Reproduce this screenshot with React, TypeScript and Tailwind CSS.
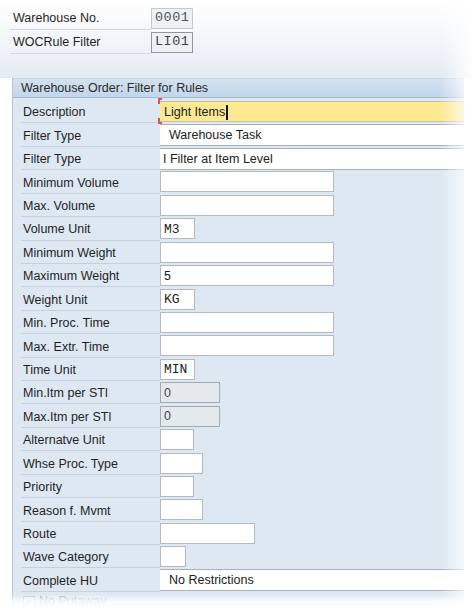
import React from 'react';

type Row =
  | { label: string; kind: 'desc' }
  | { label: string; kind: 'full'; value: string; indent?: boolean }
  | { label: string; kind: 'box'; w: string; value?: string; mono?: boolean; gray?: boolean };

const rows: Row[] = [
  { label: 'Description', kind: 'desc' },
  { label: 'Filter Type', kind: 'full', value: 'Warehouse Task', indent: true },
  { label: 'Filter Type', kind: 'full', value: 'I Filter at Item Level' },
  { label: 'Minimum Volume', kind: 'box', w: 'w-[174px]' },
  { label: 'Max. Volume', kind: 'box', w: 'w-[174px]' },
  { label: 'Volume Unit', kind: 'box', w: 'w-[35px]', value: 'M3', mono: true },
  { label: 'Minimum Weight', kind: 'box', w: 'w-[174px]' },
  { label: 'Maximum Weight', kind: 'box', w: 'w-[174px]', value: '5' },
  { label: 'Weight Unit', kind: 'box', w: 'w-[35px]', value: 'KG', mono: true },
  { label: 'Min. Proc. Time', kind: 'box', w: 'w-[174px]' },
  { label: 'Max. Extr. Time', kind: 'box', w: 'w-[174px]' },
  { label: 'Time Unit', kind: 'box', w: 'w-[35px]', value: 'MIN', mono: true },
  { label: 'Min.Itm per STl', kind: 'box', w: 'w-[60px]', value: '0', gray: true },
  { label: 'Max.Itm per STl', kind: 'box', w: 'w-[60px]', value: '0', gray: true },
  { label: 'Alternatve Unit', kind: 'box', w: 'w-[34px]' },
  { label: 'Whse Proc. Type', kind: 'box', w: 'w-[43px]' },
  { label: 'Priority', kind: 'box', w: 'w-[34px]' },
  { label: 'Reason f. Mvmt', kind: 'box', w: 'w-[43px]' },
  { label: 'Route', kind: 'box', w: 'w-[95px]' },
  { label: 'Wave Category', kind: 'box', w: 'w-[26px]' },
  { label: 'Complete HU', kind: 'full', value: 'No Restrictions', indent: true },
];

const sans = { fontFamily: '"Liberation Sans", Arial, sans-serif' };
const mono = { fontFamily: '"Liberation Mono", "Courier New", monospace' };

function Field({ row }: { row: Row }) {
  if (row.kind === 'desc') {
    return (
      <div className="relative flex-1 h-full flex items-center">
        <div className="h-[21px] w-full bg-[#fde992] border-y border-[#c9c2a0] flex items-center pl-[4px] pt-[1px] text-[12.5px] text-[#222]">
          <span>Light Items</span>
          <span className="inline-block w-[1.5px] h-[15px] bg-[#111] ml-[1px]" />
        </div>
        <div className="absolute left-[-2px] top-[-2px] w-[4px] h-[6px] border-l-2 border-t-2 border-[#d9565c]" />
        <div className="absolute left-[-2px] bottom-[-1px] w-[4px] h-[6px] border-l-2 border-b-2 border-[#d9565c]" />
      </div>
    );
  }
  if (row.kind === 'full') {
    return (
      <div className="flex-1 h-full flex items-center">
        <div
          className={`h-[22px] w-full bg-white border-y border-[#a9b0b8] flex items-center pt-[1px] text-[12.5px] text-[#222] ${
            row.indent ? 'pl-[9px]' : 'pl-[3px]'
          }`}
        >
          {row.value}
        </div>
      </div>
    );
  }
  return (
    <div className="flex-1 h-full flex items-center">
      <div
        className={`${row.w} h-[21px] border flex items-center pl-[3px] pt-[1px] ${
          row.gray ? 'bg-[#e4e9ee] border-[#a2a9b1] text-[#444]' : 'bg-white border-[#b3bac2] text-[#222]'
        } ${row.mono ? 'text-[13px]' : 'text-[12.5px]'}`}
        style={row.mono ? mono : sans}
      >
        {row.value}
      </div>
    </div>
  );
}

export default function App() {
  return (
    <div className="relative w-[474px] h-[608px] overflow-hidden bg-white text-[#222]" style={sans}>
      {/* top area */}
      <div className="h-[78px] bg-gradient-to-b from-white via-[#f3f6f9] to-[#e3ebf3] pt-[6px] pl-[10px]">
        <div className="flex items-center h-[24px]">
          <div className="w-[141px] h-full flex items-center pl-[3px] pt-[1px] border-b border-[#d3d8de] text-[12.5px] text-[#1f1f1f]">
            Warehouse No.
          </div>
          <div
            className="w-[42px] h-[21px] bg-[#eef1f4] border border-[#c3c9cf] flex items-center pl-[3px] text-[13.5px] text-[#555] tracking-[0.5px]"
            style={mono}
          >
            0001
          </div>
        </div>
        <div className="flex items-center h-[24px]">
          <div className="w-[141px] h-full flex items-center pl-[3px] pt-[1px] border-b border-[#d3d8de] text-[12.5px] text-[#1f1f1f]">
            WOCRule Filter
          </div>
          <div
            className="w-[42px] h-[21px] bg-[#eef1f4] border border-[#8e969f] flex items-center pl-[3px] text-[13.5px] text-[#444] tracking-[0.5px]"
            style={mono}
          >
            LI01
          </div>
        </div>
      </div>

      {/* panel */}
      <div className="ml-[12px] w-[452px] border-l border-[#b7c6d6] bg-[#dde8f3]">
        <div className="h-[20px] bg-gradient-to-b from-[#d3e1ef] to-[#c3d6ea] border-b border-[#a4b9cf] border-t border-t-[#c8d6e4] flex items-center pl-[8px] text-[12.5px] text-[#2a2a2a]">
          Warehouse Order: Filter for Rules
        </div>
        <div className="pt-[2px] pl-[8px]">
          {rows.map((r, i) => (
            <div key={i} className="flex items-center h-[23.43px]">
              <div className="w-[139px] h-full flex items-center pl-[2px] pt-[3px] border-b border-[#c6d0da] text-[12.5px] text-[#1f1f1f]">
                {r.label}
              </div>
              <Field row={r} />
            </div>
          ))}
          <div className="flex items-center h-[20px] pl-[2px] gap-[4px] opacity-30 text-[12.5px]">
            <div className="w-[12px] h-[12px] border border-[#777] bg-white text-[9px] leading-[10px] text-center">✓</div>
            <span>No Putaway</span>
          </div>
        </div>
      </div>

      {/* fades */}
      <div className="absolute right-0 top-0 h-full w-[34px] bg-gradient-to-r from-transparent to-white" />
      <div className="absolute left-0 bottom-0 w-full h-[14px] bg-gradient-to-b from-transparent via-white/80 to-white" />
    </div>
  );
}
